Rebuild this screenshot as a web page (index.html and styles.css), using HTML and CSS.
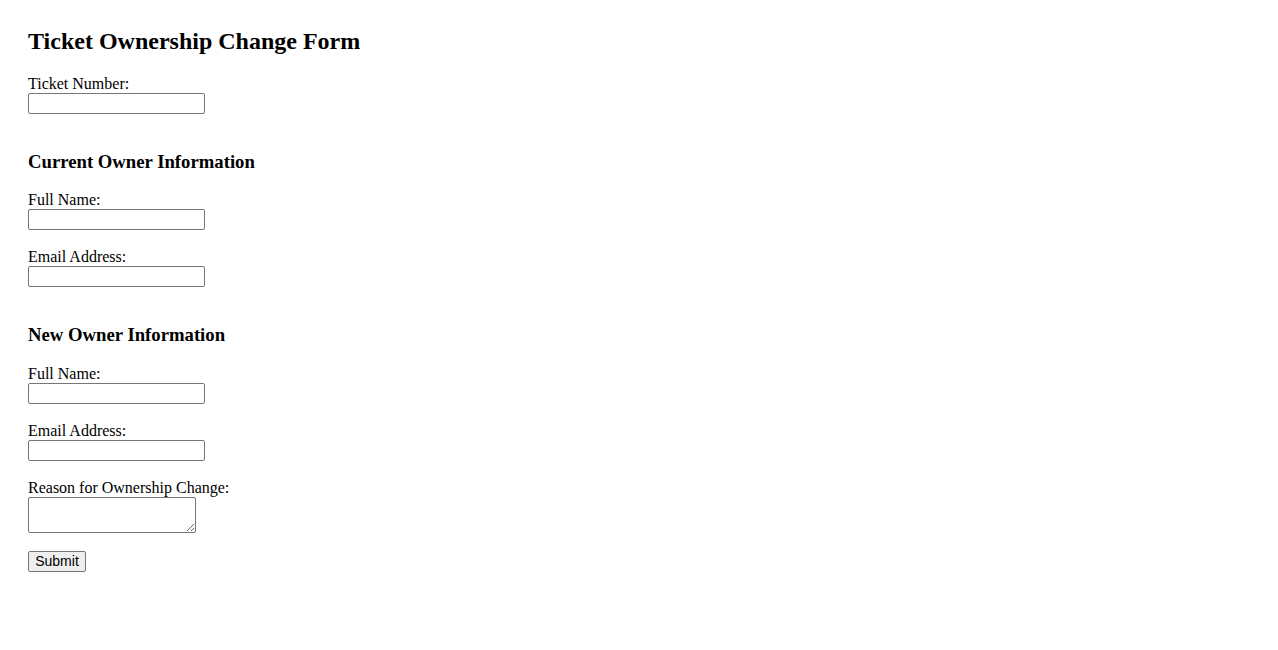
FILE: index.html
```html
<!DOCTYPE html>
<html lang="en">
<head>
<meta charset="utf-8">
<title>Ticket Ownership Change Form</title>
<link rel="stylesheet" href="styles.css">
</head>
<body>
<div class="page">
  <h2 class="title">Ticket Ownership Change Form</h2>
  <form class="form">
    <div class="field">
      <label class="label" for="ticket">Ticket Number:</label>
      <input class="input" type="text" id="ticket">
    </div>

    <h3 class="section-title">Current Owner Information</h3>
    <div class="field">
      <label class="label" for="cur-name">Full Name:</label>
      <input class="input" type="text" id="cur-name">
    </div>
    <div class="field">
      <label class="label" for="cur-email">Email Address:</label>
      <input class="input" type="text" id="cur-email">
    </div>

    <h3 class="section-title">New Owner Information</h3>
    <div class="field">
      <label class="label" for="new-name">Full Name:</label>
      <input class="input" type="text" id="new-name">
    </div>
    <div class="field">
      <label class="label" for="new-email">Email Address:</label>
      <input class="input" type="text" id="new-email">
    </div>
    <div class="field">
      <label class="label" for="reason">Reason for Ownership Change:</label>
      <textarea class="textarea" id="reason"></textarea>
    </div>
    <div class="field">
      <button class="button" type="submit">Submit</button>
    </div>
  </form>
</div>
</body>
</html>
```
FILE: styles.css
```css
html, body {
  margin: 0;
  padding: 0;
  background: #ffffff;
}

body {
  font-family: "Liberation Serif", "Times New Roman", serif;
  font-size: 16px;
  color: #000000;
}

.page {
  padding: 28px;
}

.title {
  margin: 0 0 19.92px;
  font-size: 24px;
  font-weight: bold;
  line-height: normal;
}

.form {
  margin: 0;
}

.section-title {
  margin: 37px 0 18.5px;
  font-size: 18.72px;
  font-weight: bold;
  line-height: normal;
}

.field {
  margin-bottom: 18px;
}

.label {
  display: block;
  line-height: normal;
}

.input {
  display: block;
  box-sizing: border-box;
  width: 177px;
  height: 21px;
  margin: 0;
  padding: 1px 2px;
  border: 1px solid #767676;
  border-radius: 2px;
  background: #ffffff;
  font-family: "Liberation Sans", Arial, sans-serif;
  font-size: 13.33px;
}

.textarea {
  display: block;
  box-sizing: border-box;
  width: 168px;
  height: 36px;
  margin: 0;
  padding: 2px;
  border: 1px solid #767676;
  border-radius: 2px;
  background: #ffffff;
  font-family: "Liberation Mono", monospace;
  font-size: 13.33px;
}

.button {
  display: block;
  box-sizing: border-box;
  width: 58px;
  height: 21px;
  margin: 0;
  padding: 1px 6px;
  border: 1px solid #767676;
  border-radius: 2px;
  background: #efefef;
  color: #000000;
  font-family: "Liberation Sans", Arial, sans-serif;
  font-size: 14px;
  line-height: normal;
  text-align: center;
}
```
